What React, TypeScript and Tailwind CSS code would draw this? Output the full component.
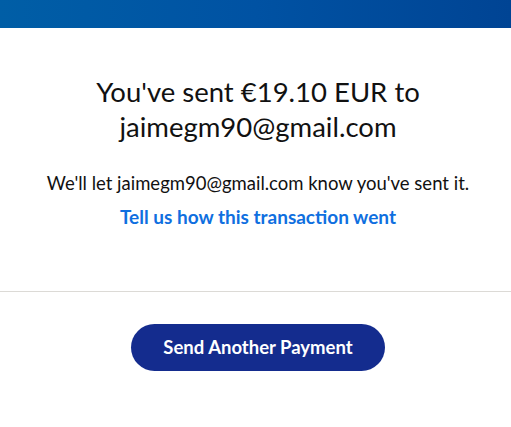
export default function App() {
  return (
    <div className="w-[511px] h-[427px] bg-white overflow-hidden font-['Lato',sans-serif] text-[#111]">
      <div className="h-[28px] bg-gradient-to-r from-[#005ea6] via-[#0052a3] to-[#004494]" />
      <div className="flex flex-col items-center pt-[46px] pl-[5px] text-center">
        <h1 className="text-[27.5px] leading-[35px] font-normal">
          You've sent €19.10 EUR to
          <br />
          jaimegm90@gmail.com
        </h1>
        <p className="mt-[27px] text-[18.5px] leading-[24px]">
          We'll let jaimegm90@gmail.com know you've sent it.
        </p>
        <a href="#" className="mt-[10px] text-[19px] leading-[24px] font-bold text-[#0f6fe0]">
          Tell us how this transaction went
        </a>
      </div>
      <div className="mt-[62px] border-t border-[#dcdad6]" />
      <div className="flex justify-center pt-[32px] pl-[5px]">
        <button className="w-[254px] h-[47px] rounded-full bg-[#142c8e] text-white text-[18.5px] font-bold">
          Send Another Payment
        </button>
      </div>
    </div>
  );
}
